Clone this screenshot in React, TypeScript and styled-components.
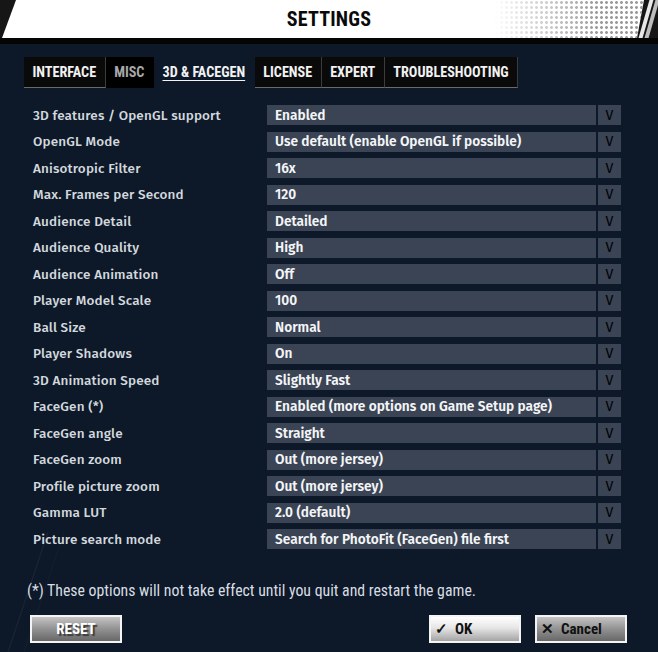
import React from 'react'
import styled, { createGlobalStyle } from 'styled-components'

const GlobalStyle = createGlobalStyle`
  html, body {
    margin: 0;
    padding: 0;
    background: #0d1828;
  }
`

const narrow = `"Liberation Sans Narrow", "Roboto Condensed", "Liberation Sans", sans-serif`
const body = `"Fira Sans", "Open Sans", "Noto Sans", sans-serif`

const Page = styled.div`
  position: relative;
  width: 658px;
  height: 652px;
  overflow: hidden;
  background: #0d1828;
  display: flex;
  flex-direction: column;
`

const HeaderBar = styled.div`
  position: relative;
  height: 38px;
  background: #161616;
  flex-shrink: 0;
`

const HeaderBand = styled.div`
  height: 100%;
  background: #fff;
  clip-path: polygon(16px 0, 644px 0, 637px 100%, 2px 100%);
  display: flex;
  align-items: center;
  justify-content: center;
  position: relative;

  &::after {
    content: '';
    position: absolute;
    top: 0;
    bottom: 0;
    right: 14px;
    width: 150px;
    background-image: radial-gradient(circle, #9a9a9a 1.1px, transparent 1.7px);
    background-size: 5px 5px;
    -webkit-mask-image: linear-gradient(to right, transparent 0, #000 70%);
    mask-image: linear-gradient(to right, transparent 0, #000 70%);
  }
`

const Slash = styled.div<{ $left: number; $color: string }>`
  position: absolute;
  top: 0;
  left: ${({ $left }) => $left}px;
  width: 4px;
  height: 38px;
  background: ${({ $color }) => $color};
  transform: skewX(-16deg);
`

const Title = styled.h1`
  margin: 0;
  font-family: ${narrow};
  font-weight: 700;
  font-size: 20px;
  color: #0a0a0a;
  letter-spacing: 0.2px;
  position: relative;
  z-index: 1;
`

const Strip = styled.div`
  height: 6px;
  background: #050505;
  flex-shrink: 0;
`

const Panel = styled.div`
  flex: 1;
  display: flex;
  flex-direction: column;
  padding: 13px 0 0 0;
  position: relative;
`

const Decor = styled.svg`
  position: absolute;
  left: 0;
  bottom: 0;
  pointer-events: none;
`

const Tabs = styled.div`
  display: flex;
  margin-left: 24px;
  height: 31px;
`

const Tab = styled.div<{ $kind: 'normal' | 'current' | 'active' }>`
  display: flex;
  align-items: center;
  padding: 0 8.5px;
  font-family: ${narrow};
  font-weight: 700;
  font-size: 14.2px;
  color: ${({ $kind }) => ($kind === 'current' ? '#a8a8a8' : '#f2f2f2')};
  background: ${({ $kind }) =>
    $kind === 'active' ? 'transparent' : $kind === 'current' ? '#000' : '#0a0a0a'};
  border-bottom: 1px solid
    ${({ $kind }) => ($kind === 'normal' ? '#6a6a6a' : 'transparent')};
  border-right: 1px solid
    ${({ $kind }) => ($kind === 'normal' ? '#3c3c3c' : 'transparent')};
  text-decoration: ${({ $kind }) => ($kind === 'active' ? 'underline' : 'none')};
  text-underline-offset: 3px;
  box-sizing: border-box;
`

const List = styled.div`
  margin-top: 14px;
  display: flex;
  flex-direction: column;
  position: relative;
`

const Row = styled.div`
  display: grid;
  grid-template-columns: 232px 329px 23px;
  column-gap: 2px;
  align-items: center;
  height: 26.5px;
  padding-left: 33px;
`

const Label = styled.div`
  font-family: ${body};
  font-weight: 500;
  font-size: 13.5px;
  letter-spacing: 0.15px;
  color: #d3d8de;
  white-space: nowrap;
`

const SelectBox = styled.div`
  height: 20px;
  background: #3a4454;
  display: flex;
  align-items: center;
  padding-left: 8px;
  font-family: ${body};
  font-weight: 600;
  font-size: 13.7px;
  color: #f4f5f7;
  white-space: nowrap;
`

const ArrowBox = styled.div`
  height: 20px;
  background: #3a4454;
  display: flex;
  align-items: center;
  justify-content: center;
  font-family: ${body};
  font-weight: 400;
  font-size: 14px;
  color: #000;
`

const Note = styled.div`
  margin: 28px 0 0 27px;
  font-family: ${narrow};
  font-size: 15.8px;
  color: #d8dde3;
  position: relative;
`

const Buttons = styled.div`
  display: flex;
  align-items: center;
  margin: 15px 0 0 30px;
  padding-right: 31px;
  position: relative;
`

const Button = styled.div<{ $variant: 'plain' | 'focus' }>`
  width: 92px;
  height: 28px;
  box-sizing: border-box;
  border: 2px solid #f4f4f4;
  background: ${({ $variant }) =>
    $variant === 'focus'
      ? 'linear-gradient(to bottom, #ffffff 0%, #e6e6e6 45%, #a4a4a4 100%)'
      : 'linear-gradient(to bottom, #c4c4c4 0%, #929292 50%, #686868 100%)'};
  display: flex;
  align-items: center;
  gap: 7px;
  padding-left: 4px;
  font-family: ${narrow};
  font-weight: 700;
  font-size: 15px;
  color: #111;
`

const ResetButton = styled(Button)`
  justify-content: center;
  padding-left: 0;
  color: #fff;
  text-shadow: 2px 2px 1px #3a3a3a;
`

const Spacer = styled.div`
  flex: 1;
`

const rows: [string, string][] = [
  ['3D features / OpenGL support', 'Enabled'],
  ['OpenGL Mode', 'Use default (enable OpenGL if possible)'],
  ['Anisotropic Filter', '16x'],
  ['Max. Frames per Second', '120'],
  ['Audience Detail', 'Detailed'],
  ['Audience Quality', 'High'],
  ['Audience Animation', 'Off'],
  ['Player Model Scale', '100'],
  ['Ball Size', 'Normal'],
  ['Player Shadows', 'On'],
  ['3D Animation Speed', 'Slightly Fast'],
  ['FaceGen (*)', 'Enabled (more options on Game Setup page)'],
  ['FaceGen angle', 'Straight'],
  ['FaceGen zoom', 'Out (more jersey)'],
  ['Profile picture zoom', 'Out (more jersey)'],
  ['Gamma LUT', '2.0 (default)'],
  ['Picture search mode', 'Search for PhotoFit (FaceGen) file first'],
]

const tabs: { name: string; kind: 'normal' | 'current' | 'active' }[] = [
  { name: 'INTERFACE', kind: 'normal' },
  { name: 'MISC', kind: 'current' },
  { name: '3D & FACEGEN', kind: 'active' },
  { name: 'LICENSE', kind: 'normal' },
  { name: 'EXPERT', kind: 'normal' },
  { name: 'TROUBLESHOOTING', kind: 'normal' },
]

const App = () => {
  return (
    <Page>
      <GlobalStyle />
      <HeaderBar>
        <HeaderBand>
          <Title>SETTINGS</Title>
        </HeaderBand>
        <Slash $left={644} $color="#e8e8e8" />
        <Slash $left={650} $color="#bdbdbd" />
      </HeaderBar>
      <Strip />
      <Panel>
        <Decor width="80" height="130" viewBox="0 0 80 130">
          <path d="M8 130 L48 10" stroke="#172234" strokeWidth="1.5" fill="none" />
          <path d="M24 130 L64 10" stroke="#142032" strokeWidth="1" fill="none" />
        </Decor>
        <Tabs>
          {tabs.map((t) => (
            <Tab key={t.name} $kind={t.kind}>
              {t.name}
            </Tab>
          ))}
        </Tabs>
        <List>
          {rows.map(([label, value]) => (
            <Row key={label}>
              <Label>{label}</Label>
              <SelectBox>{value}</SelectBox>
              <ArrowBox>V</ArrowBox>
            </Row>
          ))}
        </List>
        <Note>(*) These options will not take effect until you quit and restart the game.</Note>
        <Buttons>
          <ResetButton $variant="plain">RESET</ResetButton>
          <Spacer />
          <Button $variant="focus" style={{ marginRight: 14 }}>
            <span>✓</span>
            <span>OK</span>
          </Button>
          <Button $variant="plain">
            <span>✕</span>
            <span>Cancel</span>
          </Button>
        </Buttons>
      </Panel>
    </Page>
  )
}

export default App
